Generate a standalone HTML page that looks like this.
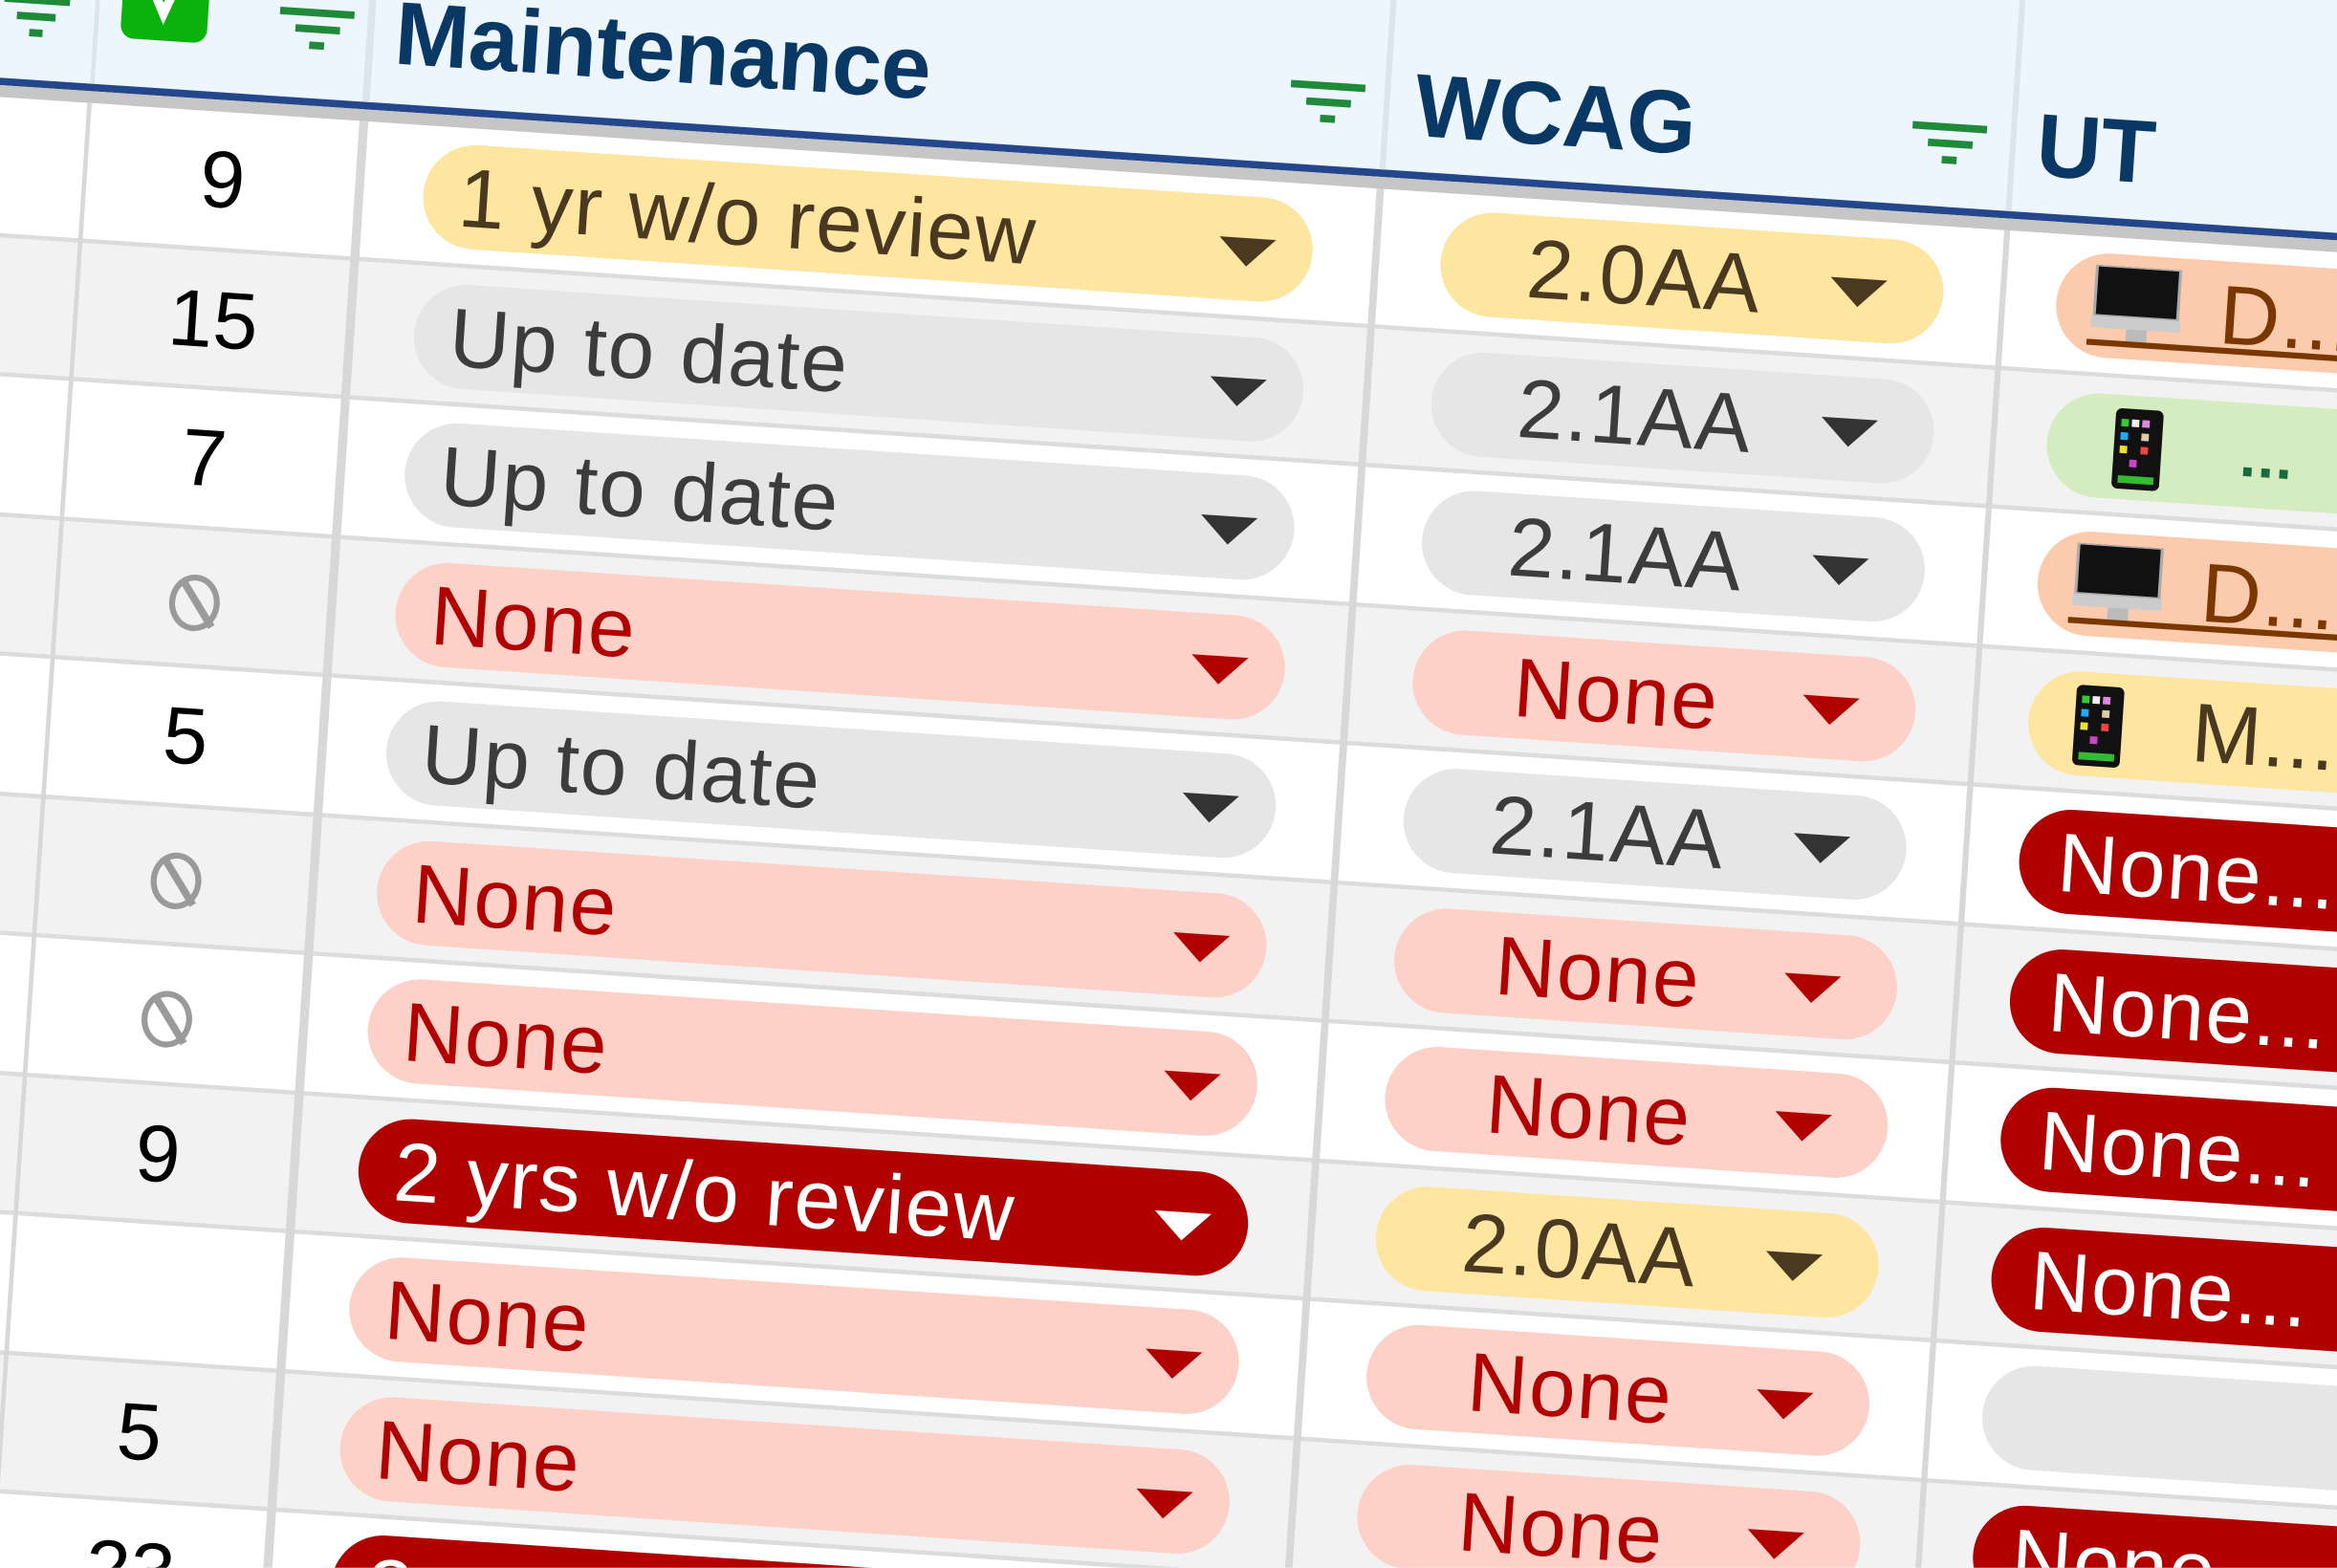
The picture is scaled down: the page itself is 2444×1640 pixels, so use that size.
<!DOCTYPE html>
<html><head><meta charset="utf-8"><style>
html,body{margin:0;padding:0;background:#fff;}
body{width:2444px;height:1640px;overflow:hidden;position:relative;font-family:"Liberation Sans",sans-serif;}
.stage{position:absolute;left:0;top:0;width:1568px;height:1052px;transform:scale(1.5587);transform-origin:0 0;overflow:hidden;}
.t{position:absolute;left:0;top:0;transform:rotate(3.8deg);transform-origin:0 0;}
.a{position:absolute;}
.row{position:absolute;left:-200px;width:2300px;height:90.5px;border-bottom:3px solid #dcdcdc;}
.w{background:#fff}.g{background:#f2f2f2}
.num{position:absolute;left:265px;width:184px;top:0;height:93px;line-height:93px;text-align:center;font-size:54px;color:#000;}
.pill{position:absolute;top:11px;height:70px;border-radius:35px;line-height:72px;font-size:56px;letter-spacing:1px;white-space:nowrap;overflow:hidden;}
.m{left:492px;width:598px;padding-left:24px;box-sizing:border-box;}
.c{left:1176px;width:338px;text-align:center;padding-right:74px;padding-left:10px;box-sizing:border-box;}
.u{left:1590px;width:500px;box-sizing:border-box;}
.arr{position:absolute;top:28px;width:0;height:0;border-left:19px solid transparent;border-right:19px solid transparent;border-top:19px solid currentColor;}
.m .arr{left:535px}.c .arr{left:262px}
.y{background:#fee5a0;color:#4a3820}
.gr{background:#e6e6e6;color:#3c3c3c}
.gr .arr{color:#333}
.lr{background:#fdd0c8;color:#b00000}
.dr{background:#b00000;color:#fff}
.gn{background:#d5ecc0;color:#1a6a40}
.or{background:#fccbae;color:#7a3800}
.zero{position:absolute;left:340px;top:30px;width:26px;height:30px;border:4.5px solid #9a9a9a;border-radius:50%;}
.zero:after{content:"";position:absolute;left:12px;top:-4px;width:4.5px;height:38px;background:#9a9a9a;transform:rotate(-35deg);}
.vl{position:absolute;top:65px;height:1300px;background:#d8d8d8;}
.vh{position:absolute;top:-260px;height:312px;background:#dde4ec;width:3px;}
.filt{position:absolute;width:50px;height:30px;}
.filt i{position:absolute;height:4.5px;background:#1e8a3a;}
.hd{position:absolute;font-weight:bold;color:#0a3864;font-size:60px;letter-spacing:-0.3px;}
</style></head><body>
<div class="stage"><div class="t">
<div class="a" style="left:-200px;top:-260px;width:2300px;height:312px;background:#eef6fd"></div>
<div class="a" style="left:-200px;top:52px;width:2300px;height:5px;background:#23478a"></div>
<div class="a" style="left:-200px;top:57px;width:2300px;height:8px;background:#c6c6c6"></div>
<div class="vh" style="left:64px"></div>
<div class="vh" style="left:247px;width:5px"></div>
<div class="vh" style="left:931px;width:4px"></div>
<div class="vh" style="left:1352px;width:4px"></div>
<div class="filt" style="left:3px;top:-4px"><i style="left:0;top:0;width:44px"></i><i style="left:9px;top:11px;width:26px"></i><i style="left:18px;top:22px;width:9px"></i></div>
<div class="a" style="left:82px;top:-40px;width:58px;height:60px;background:#0cb20c;border-radius:9px"><svg width="58" height="60" style="position:absolute;left:0;top:0"><path d="M16 18 L28 42 L42 6" stroke="#fff" stroke-width="6" fill="none"/></svg></div>
<div class="filt" style="left:188px;top:-8px"><i style="left:0;top:0;width:50px"></i><i style="left:11px;top:11px;width:30px"></i><i style="left:21px;top:22px;width:10px"></i></div>
<div class="hd" style="left:266px;top:-30px">Maintenance</div>
<div class="filt" style="left:868px;top:-4px"><i style="left:0;top:0;width:50px"></i><i style="left:11px;top:11px;width:30px"></i><i style="left:21px;top:22px;width:10px"></i></div>
<div class="hd" style="left:952px;top:-27px">WCAG</div>
<div class="filt" style="left:1286px;top:-4px"><i style="left:0;top:0;width:50px"></i><i style="left:11px;top:11px;width:30px"></i><i style="left:21px;top:22px;width:10px"></i></div>
<div class="hd" style="left:1370px;top:-28px">UT</div>

<div class="row w" style="top:65px">
 <div class="num">9</div>
 <div class="pill m y">1 yr w/o review<span class="arr"></span></div>
 <div class="pill c y">2.0AA<span class="arr"></span></div>
 <div class="pill u or"><svg width="64" height="56" style="position:absolute;left:22px;top:8px"><rect x="4" y="0" width="56" height="34" fill="#111" stroke="#aaa" stroke-width="2"/><rect x="2" y="34" width="60" height="8" fill="#ccc"/><rect x="26" y="42" width="14" height="8" fill="#bbb"/></svg><span style="position:absolute;left:110px;top:0">D...</span><div class="a" style="left:22px;top:58px;width:400px;height:4px;background:#7a3800"></div></div>
</div>
<div class="row g" style="top:158.5px">
 <div class="num">15</div>
 <div class="pill m gr">Up to date<span class="arr"></span></div>
 <div class="pill c gr">2.1AA<span class="arr"></span></div>
 <div class="pill u gn"><svg width="34" height="56" style="position:absolute;left:44px;top:8px"><rect x="1" y="1" width="32" height="54" rx="4" fill="#111"/><rect x="5" y="8" width="5" height="5" fill="#3c3"/><rect x="12" y="8" width="5" height="5" fill="#eee"/><rect x="19" y="8" width="5" height="5" fill="#d8d"/><rect x="5" y="17" width="5" height="5" fill="#2af"/><rect x="19" y="17" width="5" height="5" fill="#dca"/><rect x="5" y="26" width="5" height="5" fill="#ed3"/><rect x="19" y="26" width="5" height="5" fill="#e44"/><rect x="12" y="35" width="5" height="5" fill="#c4c"/><rect x="5" y="46" width="24" height="5" fill="#3b3"/></svg><span style="position:absolute;left:130px;top:0;font-weight:bold;font-size:40px">...</span></div>
</div>
<div class="row w" style="top:252px">
 <div class="num">7</div>
 <div class="pill m gr">Up to date<span class="arr"></span></div>
 <div class="pill c gr">2.1AA<span class="arr"></span></div>
 <div class="pill u or"><svg width="64" height="56" style="position:absolute;left:22px;top:8px"><rect x="4" y="0" width="56" height="34" fill="#111" stroke="#aaa" stroke-width="2"/><rect x="2" y="34" width="60" height="8" fill="#ccc"/><rect x="26" y="42" width="14" height="8" fill="#bbb"/></svg><span style="position:absolute;left:110px;top:0">D...</span><div class="a" style="left:22px;top:58px;width:400px;height:4px;background:#7a3800"></div></div>
</div>
<div class="row g" style="top:345.5px">
 <div class="zero"></div>
 <div class="pill m lr">None<span class="arr"></span></div>
 <div class="pill c lr">None<span class="arr"></span></div>
 <div class="pill u y"><svg width="34" height="56" style="position:absolute;left:30px;top:8px"><rect x="1" y="1" width="32" height="54" rx="4" fill="#111"/><rect x="5" y="8" width="5" height="5" fill="#3c3"/><rect x="12" y="8" width="5" height="5" fill="#eee"/><rect x="19" y="8" width="5" height="5" fill="#d8d"/><rect x="5" y="17" width="5" height="5" fill="#2af"/><rect x="19" y="17" width="5" height="5" fill="#dca"/><rect x="5" y="26" width="5" height="5" fill="#ed3"/><rect x="19" y="26" width="5" height="5" fill="#e44"/><rect x="12" y="35" width="5" height="5" fill="#c4c"/><rect x="5" y="46" width="24" height="5" fill="#3b3"/></svg><span style="position:absolute;left:110px;top:0">M...</span></div>
</div>
<div class="row w" style="top:439px">
 <div class="num">5</div>
 <div class="pill m gr">Up to date<span class="arr"></span></div>
 <div class="pill c gr">2.1AA<span class="arr"></span></div>
 <div class="pill u dr" style="padding-left:26px">None...</div>
</div>
<div class="row g" style="top:532.5px">
 <div class="zero"></div>
 <div class="pill m lr">None<span class="arr"></span></div>
 <div class="pill c lr">None<span class="arr"></span></div>
 <div class="pill u dr" style="padding-left:26px">None...</div>
</div>
<div class="row w" style="top:626px">
 <div class="zero"></div>
 <div class="pill m lr">None<span class="arr"></span></div>
 <div class="pill c lr">None<span class="arr"></span></div>
 <div class="pill u dr" style="padding-left:26px">None...</div>
</div>
<div class="row g" style="top:719.5px">
 <div class="num">9</div>
 <div class="pill m dr">2 yrs w/o review<span class="arr"></span></div>
 <div class="pill c y">2.0AA<span class="arr"></span></div>
 <div class="pill u dr" style="padding-left:26px">None...</div>
</div>
<div class="row w" style="top:813px">
 <div class="pill m lr">None<span class="arr"></span></div>
 <div class="pill c lr">None<span class="arr"></span></div>
 <div class="pill u gr"></div>
</div>
<div class="row g" style="top:906.5px">
 <div class="num">5</div>
 <div class="pill m lr">None<span class="arr"></span></div>
 <div class="pill c lr">None<span class="arr"></span></div>
 <div class="pill u dr" style="padding-left:26px">None...</div>
</div>
<div class="row w" style="top:1000px">
 <div class="num">23</div>
 <div class="pill m dr">2 yrs w/o review<span class="arr"></span></div>
 <div class="pill c lr">None<span class="arr"></span></div>
 <div class="pill u dr" style="padding-left:26px">None...</div>
</div>
<div class="row g" style="top:1093.5px"></div>

<div class="vl" style="left:63px;width:3px"></div>
<div class="vl" style="left:246px;width:6px"></div>
<div class="vl" style="left:930px;width:5px"></div>
<div class="vl" style="left:1352px;width:4px"></div>
</div></div>
</body></html>
